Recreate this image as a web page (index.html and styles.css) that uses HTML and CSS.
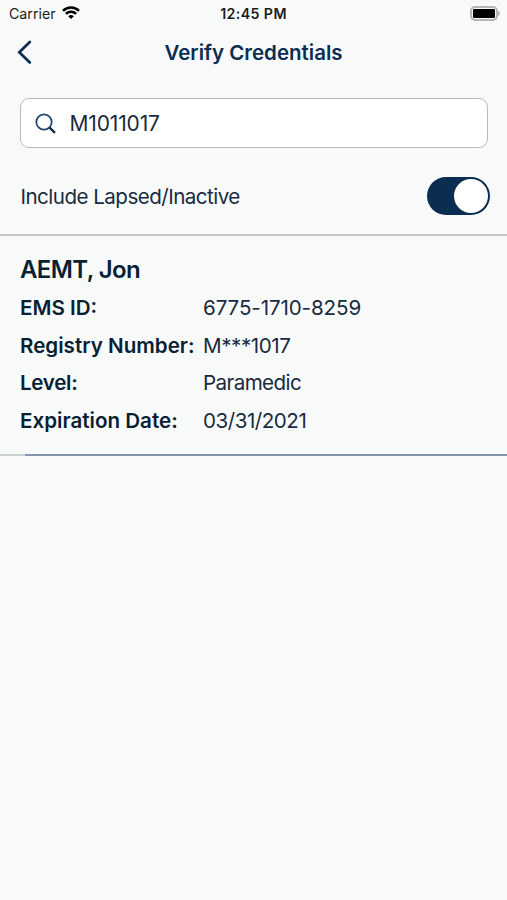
FILE: index.html
```html
<!DOCTYPE html>
<html lang="en">
<head>
<meta charset="utf-8">
<title>Verify Credentials</title>
<link rel="stylesheet" href="styles.css">
</head>
<body>
<div class="status">
  <div class="carrier"><span>Carrier</span>
    <svg class="wifi" viewBox="0 0 18 13"><g fill="none" stroke="#000" stroke-width="2.5"><path d="M1 4.800a11.600 11.600 0 0 1 16 0"/><path d="M3.900 7.900a7.300 7.300 0 0 1 10.200 0"/></g><path d="M6.200 10.200a4.400 4.400 0 0 1 5.600 0L9 13z"/></svg>
  </div>
  <span class="clock">12:45 PM</span>
  <svg class="battery" viewBox="0 0 31 15"><rect x="1" y="1" width="26" height="13" rx="4" fill="#f7faf9" stroke="#b5b7b7" stroke-width="2"/><rect x="3" y="3" width="22" height="9" rx="1"/><path d="M28 5q2 .8 2 2.500t-2 2.500z" fill="#b5b7b7"/></svg>
</div>
<header class="nav">
  <svg class="back" viewBox="0 0 16 24"><path d="M13.800 2 3.300 12.300l10.500 10.200" fill="none" stroke="#0c2d52" stroke-width="2.700" stroke-linecap="round"/></svg>
  <h1 class="title">Verify Credentials</h1>
</header>
<div class="search">
  <svg class="glass" viewBox="0 0 22 22"><g fill="none" stroke="#1c416c"><circle cx="9" cy="9" r="7.700" stroke-width="1.700"/><path d="m14.600 14.600 5.400 5.300" stroke="#0c2d52" stroke-width="2.300"/></g></svg>
  <span class="query">M1011017</span>
</div>
<div class="filter"><span class="filter-label">Include Lapsed/Inactive</span><span class="switch"></span></div>
<section class="card">
  <h2 class="name">AEMT, Jon</h2>
  <dl class="rows">
    <dt>EMS ID:</dt><dd class="ems-id">6775-1710-8259</dd>
    <dt>Registry Number:</dt><dd class="registry">M***1017</dd>
    <dt class="level-label">Level:</dt><dd class="level">Paramedic</dd>
    <dt>Expiration Date:</dt><dd class="expiration">03/31/2021</dd>
  </dl>
</section>
<div class="rule"></div>
</body>
</html>
```
FILE: styles.css
```css
* { box-sizing: border-box; }
body { margin: 0; height: 900px; overflow: hidden; background: #f7faf9; color: #1a2b40; font-family: Inter, sans-serif; }
h1, h2, dl, dd { margin: 0; }
svg { display: block; }
.status { display: grid; grid-template-columns: 1fr auto 1fr; align-items: center; height: 27px; padding: 0 6px 0 9px; color: #1c1c1c; font-size: 14.2px; }
.carrier { display: flex; align-items: center; gap: 6px; }
.wifi { width: 18px; height: 13px; margin-top: -2px; }
.clock { font-weight: 600; letter-spacing: .4px; margin-right: 3px; }
.battery { width: 31px; height: 15px; justify-self: end; margin-top: -1px; }
.nav { display: grid; grid-template-columns: 40px 1fr 40px; align-items: center; height: 50px; }
.back { width: 16px; height: 24px; margin-left: 15.5px; }
.title { padding-top: 2px; font-size: 20.5px; line-height: 24px; font-weight: 600; text-align: center; color: #0c2d52; }
.search { display: flex; align-items: center; gap: 13px; height: 50px; margin: 21px 19px 0 20px; padding: 1px 14px 0 13.5px; border: 1px solid #b7babb; border-radius: 9px; background: #fff; font-size: 21px; }
.query { letter-spacing: -.15px; }
.glass { width: 22px; height: 22px; }
.filter { display: flex; align-items: center; justify-content: space-between; height: 88px; padding: 9px 17px 0 20.5px; border-bottom: 2px solid #c4c6c6; font-size: 20.6px; }
.filter-label { padding-top: 1px; letter-spacing: -.54px; }
.switch { display: flex; justify-content: flex-end; width: 63px; height: 38px; padding: 2px; border-radius: 19px; background: #0c2d52; }
.switch::after { content: ""; width: 34px; height: 34px; border-radius: 50%; background: #fff; }
.card { height: 218px; padding: 19px 20px 0; }
.name { margin-bottom: 4px; font-size: 24px; line-height: 30px; font-weight: 600; letter-spacing: -.6px; color: #0b1f33; }
.rows { display: grid; grid-template-columns: 183px 1fr; grid-auto-rows: 37.6px; align-items: center; font-size: 20.6px; white-space: nowrap; }
dt { font-weight: 600; color: #0b1f33; }
.level-label { letter-spacing: -.3px; }
.ems-id { letter-spacing: -.12px; }
.registry { letter-spacing: -.45px; }
.level { letter-spacing: -.6px; }
.expiration { letter-spacing: -.48px; }
.rule { height: 2px; background: linear-gradient(90deg, #ced2d4 25px, #8496a9 25px); }
```
